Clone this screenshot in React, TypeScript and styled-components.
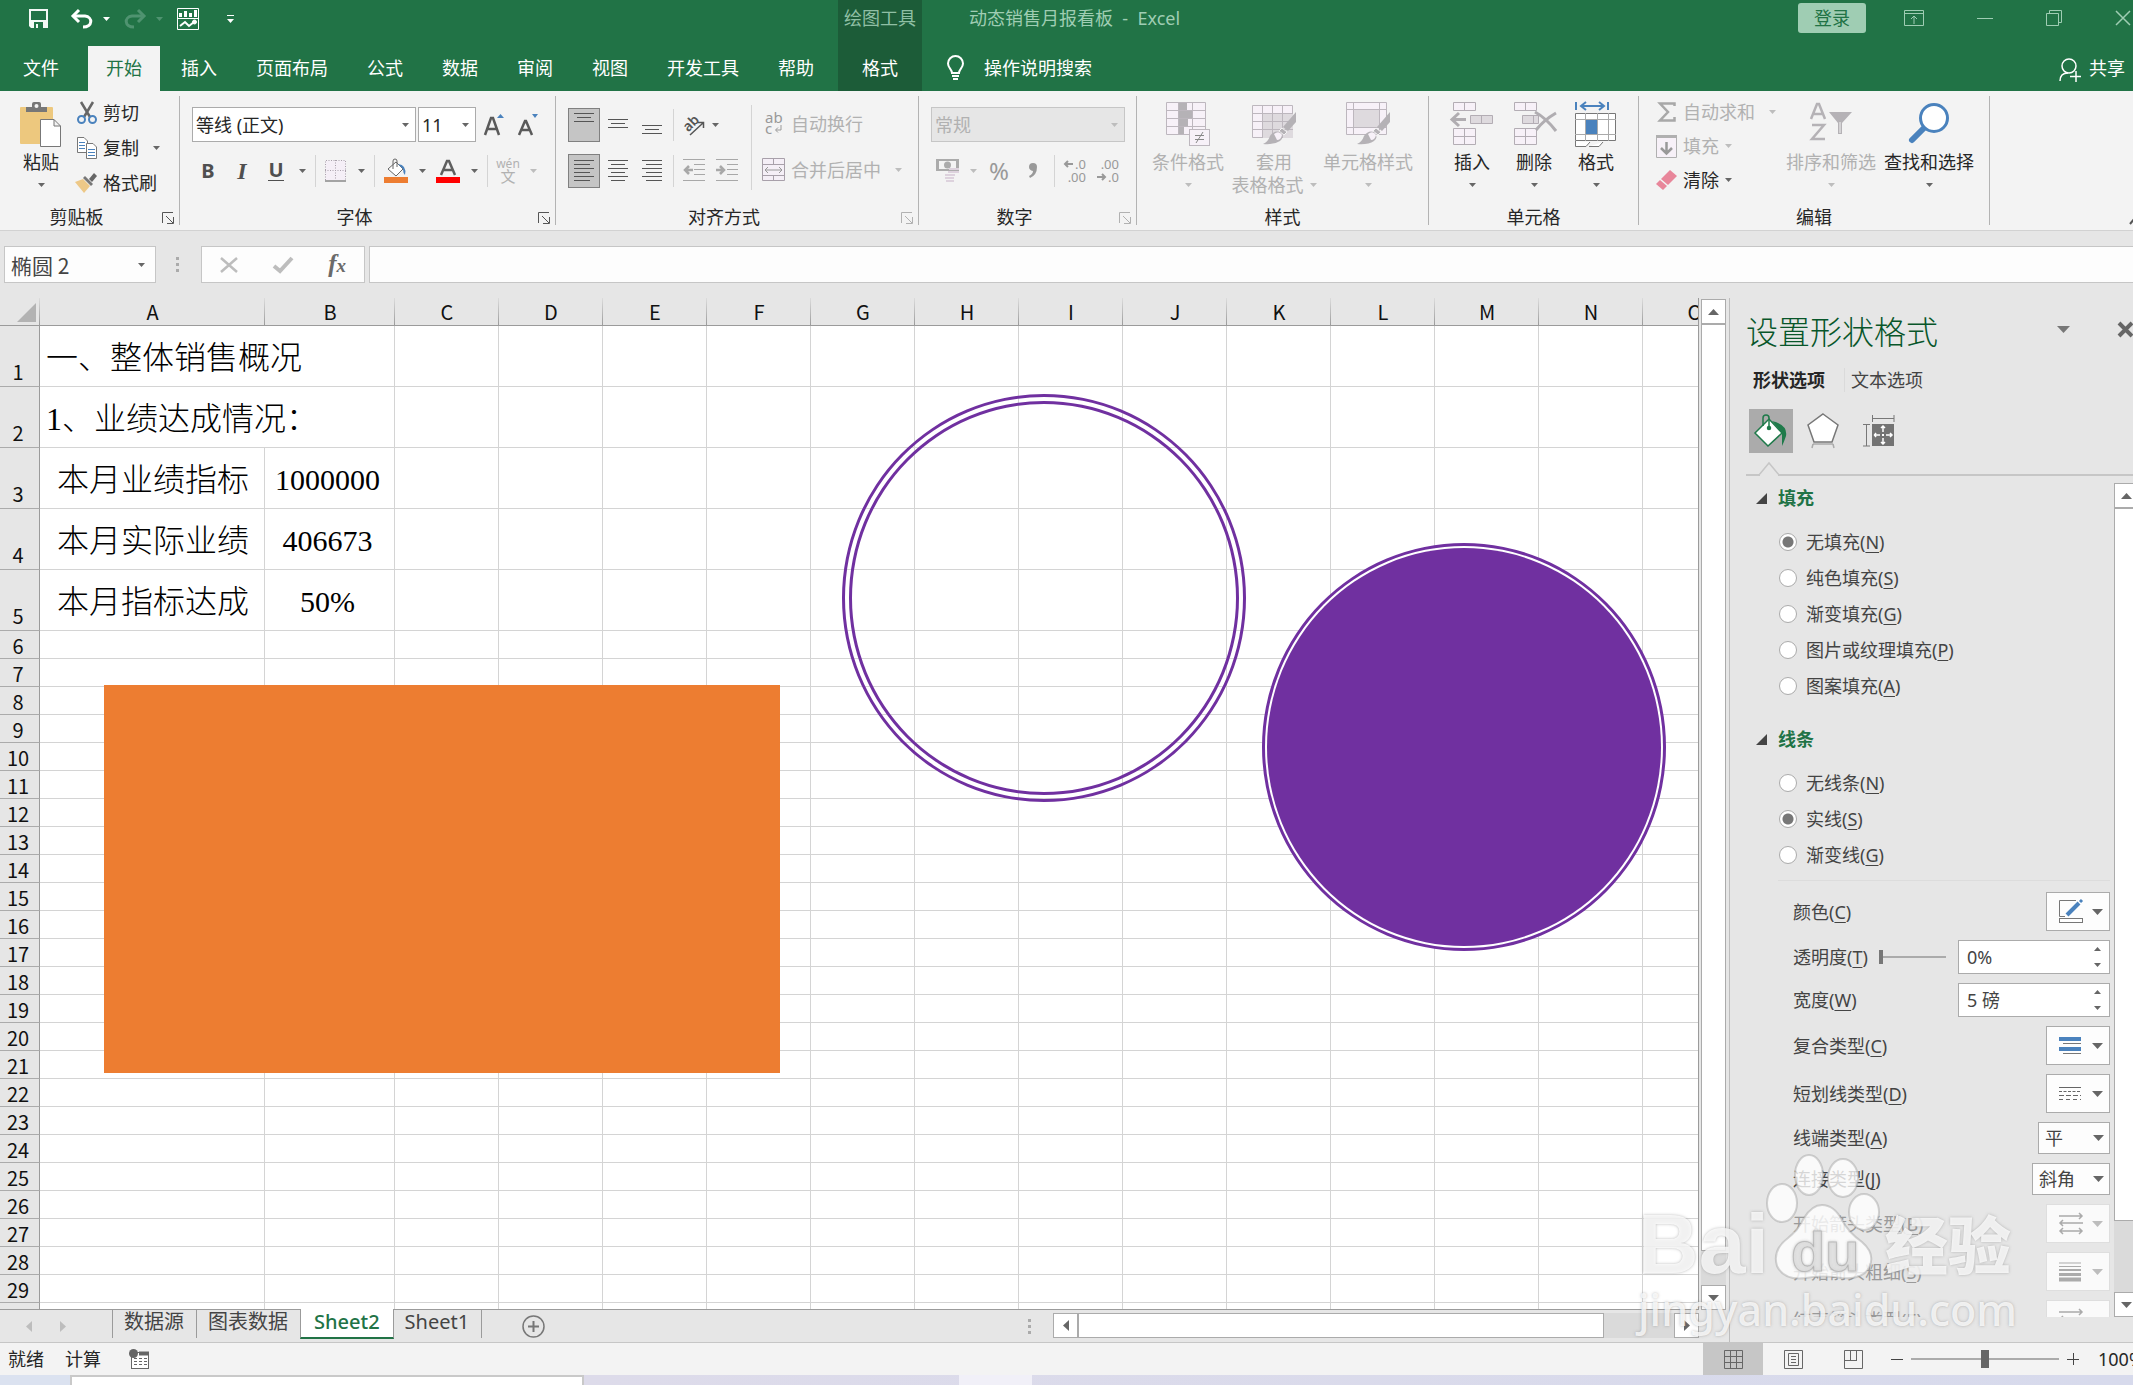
import React from 'react';
import styled, { createGlobalStyle, css } from 'styled-components';

const UI = '"Noto Sans", "Noto Sans CJK SC", sans-serif';
const GRID = '"Noto Sans CJK SC", sans-serif';

const c = {
  green: '#217346',
  darkGreen: '#1c5c38',
  mint: '#9fcdb3',
  ribbon: '#f3f3f3',
  chrome: '#e6e6e6',
  line: '#c6c6c6',
  text: '#262626',
  muted: '#b1b1b1',
  icon: '#666666',
  blue: '#4a82bd',
  purple: '#7030a0',
  orange: '#ed7d31',
};

const Global = createGlobalStyle`
  *, *::before, *::after { box-sizing: border-box; }
  body { margin: 0; overflow: hidden; background: ${c.chrome}; }
  button, input, select { font: inherit; color: inherit; margin: 0; }
  svg { display: block; flex: none; overflow: visible; }
`;

const Window = styled.div`
  display: flex;
  flex-direction: column;
  height: 100vh;
  overflow: hidden;
  position: relative;
  font-family: ${UI};
  font-size: 18px;
  line-height: 24px;
  color: ${c.text};
  white-space: nowrap;
`;

const plainButton = css`
  appearance: none;
  border: 0;
  background: none;
  padding: 0;
  color: inherit;
  cursor: pointer;
`;

/* ---------- title bar and tabs ---------- */

const Header = styled.header`
  display: grid;
  grid-template-columns: auto 84px minmax(0, 1fr);
  grid-template-rows: 46px 45px;
  background: ${c.green};
  color: #fff;
`;

const QuickAccess = styled.div`
  display: flex;
  align-items: center;
  gap: 14px;
  padding: 0 0 8px 29px;
`;

const QuickButton = styled.button<{ $before?: number; $after?: number }>`
  ${plainButton}
  display: flex;
  align-items: center;
  gap: 10px;
  margin-left: ${p => p.$before ?? 0}px;
  margin-right: ${p => p.$after ?? 0}px;
`;

const Tabs = styled.nav`
  grid-row: 2;
  display: flex;
  gap: 3px;
  padding: 0 6px 0 5px;
`;

const Tab = styled.button<{ $active?: boolean; $file?: boolean }>`
  ${plainButton}
  padding: 0 18px 2px;
  margin-right: ${p => (p.$file ? 8 : 0)}px;
  background: ${p => (p.$active ? c.ribbon : 'none')};
  color: ${p => (p.$active ? c.green : '#fff')};
`;

const ContextGroup = styled.div`
  grid-row: 1 / span 2;
  grid-column: 2;
  display: grid;
  grid-template-rows: 46px 45px;
  background: ${c.darkGreen};
  text-align: center;
`;

const ContextTitle = styled.span`
  color: #8fbfa4;
  line-height: 36px;
`;

const TitleArea = styled.div`
  grid-column: 3;
  display: flex;
  align-items: center;
  padding: 0 2px 10px 47px;
  color: ${c.mint};
`;

const DocTitle = styled.span`
  flex: 1;
  white-space: pre;
`;

const SignIn = styled.button`
  ${plainButton}
  width: 68px;
  height: 30px;
  margin-right: 38px;
  border-radius: 3px;
  background: ${c.mint};
  color: ${c.green};
`;

const WindowControls = styled.div`
  display: flex;
  align-items: center;
  gap: 53px;
`;

const ControlButton = styled.button`
  ${plainButton}
`;

const TellMeRow = styled.div`
  grid-column: 3;
  display: flex;
  align-items: center;
  justify-content: space-between;
  padding: 0 8px 2px 25px;
`;

const TellMe = styled.button`
  ${plainButton}
  display: flex;
  align-items: center;
  gap: 20px;
`;

const Share = styled(TellMe)`
  gap: 8px;
  & > svg { margin-top: 4px; }
`;

/* ---------- ribbon ---------- */

const RibbonBar = styled.div`
  display: flex;
  height: 140px;
  padding: 5px 0;
  background: ${c.ribbon};
  border-bottom: 1px solid #d2d2d2;
`;

const Group = styled.section<{ $w: number }>`
  flex: none;
  display: flex;
  flex-direction: column;
  width: ${p => p.$w}px;
  border-right: 1px solid #b3b3b3;
`;

const GroupBody = styled.div<{ $left: number }>`
  flex: 1;
  display: flex;
  padding-left: ${p => p.$left}px;
`;

const GroupFooter = styled.div`
  display: flex;
  align-items: center;
  height: 20px;
  padding-top: 3px;
`;

const GroupName = styled.span`
  flex: 1;
  text-align: center;
`;

const Launcher = styled.button<{ $dim?: boolean }>`
  ${plainButton}
  width: 26px;
  padding: 2px 0 0 9px;
  color: ${p => (p.$dim ? c.muted : '#555')};
`;

const Stack = styled.div`
  display: flex;
  flex-direction: column;
  gap: 11px;
  padding-top: 11px;
`;

const ToolRow = styled.div`
  display: flex;
  align-items: center;
  gap: 2px;
  height: 35px;
`;

const Tool = styled.button<{ $w?: number; $on?: boolean; $dim?: boolean }>`
  ${plainButton}
  display: flex;
  align-items: center;
  justify-content: center;
  gap: 7px;
  width: ${p => p.$w ?? 32}px;
  height: 34px;
  color: ${p => (p.$dim ? c.muted : '#4f4f4f')};
  ${p => p.$on && css`
    background: #c5c5c5;
    border: 1px solid #808080;
  `}
`;

const Letter = styled.span<{ $italic?: boolean; $line?: boolean }>`
  font-size: 20px;
  font-weight: 700;
  line-height: 20px;
  font-family: ${p => (p.$italic ? '"Liberation Serif", serif' : UI)};
  font-style: ${p => (p.$italic ? 'italic' : 'normal')};
  border-bottom: ${p => (p.$line ? '1px solid #4f4f4f' : '0')};
`;

const SerifLetter = styled(Letter)`
  font-size: 24px;
`;

const Split = styled.span`
  width: 1px;
  height: 32px;
  margin: 0 3px;
  background: #d4d4d4;
`;

const TallSplit = styled.span`
  width: 1px;
  height: 85px;
  margin: 9px 10px 0 8px;
  background: #d4d4d4;
`;

const SelectBox = styled.span<{ $w: number; $h?: number; $dim?: boolean }>`
  position: relative;
  display: flex;
  width: ${p => p.$w}px;
  height: ${p => p.$h ?? 35}px;
  color: ${p => (p.$dim ? c.muted : c.text)};
  & > select {
    appearance: none;
    width: 100%;
    padding: 0 20px 0 3px;
    border: 1px solid ${p => (p.$dim ? '#c6c6c6' : '#ababab')};
    border-radius: 0;
    background: ${p => (p.$dim ? c.chrome : '#fff')};
    opacity: 1;
  }
  & > svg {
    position: absolute;
    right: 7px;
    top: calc(50% - 2px);
    pointer-events: none;
  }
`;

const WideTool = styled.button<{ $dim?: boolean; $h: number; $far?: boolean }>`
  ${plainButton}
  display: flex;
  align-items: center;
  gap: 6px;
  height: ${p => p.$h}px;
  padding-bottom: 2px;
  color: ${p => (p.$dim ? c.muted : c.text)};
  & > svg:last-child { margin-left: ${p => (p.$far ? 8 : 0)}px; }
`;

const IconSlot = styled.span<{ $w: number; $end?: boolean }>`
  display: flex;
  justify-content: ${p => (p.$end ? 'flex-end' : 'center')};
  width: ${p => p.$w}px;
`;

const ToolColumn = styled.div<{ $w?: number }>`
  display: flex;
  flex-direction: column;
  width: ${p => (p.$w ? p.$w + 'px' : 'auto')};
`;

const BigTool = styled.button<{ $w: number; $dim?: boolean }>`
  ${plainButton}
  display: flex;
  flex-direction: column;
  align-items: center;
  align-self: flex-start;
  width: ${p => p.$w}px;
  padding-top: 6px;
  color: ${p => (p.$dim ? c.muted : c.text)};
`;

const BigIcon = styled.span`
  height: 48px;
`;

const BigSecond = styled.span`
  display: flex;
  align-items: center;
  gap: 6px;
  height: 22px;
`;

const Collapse = styled.button`
  ${plainButton}
  align-self: flex-end;
  margin-left: auto;
  width: 4px;
  overflow: hidden;
`;

/* ---------- formula bar ---------- */

const FormulaBar = styled.div`
  display: flex;
  align-items: center;
  padding: 15px 0 15px 4px;
  background: ${c.chrome};
`;

const NameBox = styled.label`
  display: flex;
  align-items: center;
  width: 152px;
  height: 37px;
  padding-right: 10px;
  border: 1px solid ${c.line};
  background: #fdfdfd;
  & > input {
    flex: 1;
    min-width: 0;
    border: 0;
    padding: 0 0 0 6px;
    background: none;
    font-family: ${GRID};
    font-size: 21px;
    color: #444;
  }
`;

const Grip = styled.span`
  display: flex;
  flex-direction: column;
  gap: 3px;
  margin: 0 22px 0 20px;
  &::before, &::after, & > i {
    content: '';
    width: 3px;
    height: 3px;
    background: #ababab;
  }
`;

const FormulaButtons = styled.div`
  display: flex;
  align-items: center;
  justify-content: space-between;
  width: 164px;
  height: 37px;
  padding: 0 18px;
  border: 1px solid ${c.line};
  background: #fdfdfd;
`;

const FxText = styled.span`
  font: italic 700 25px/30px "Liberation Serif", serif;
  color: #6a6a6a;
  & > small { font-size: 19px; }
`;

const FormulaInput = styled.input`
  flex: 1;
  height: 37px;
  margin-left: 4px;
  border: 1px solid ${c.line};
  border-right: 0;
  border-radius: 0;
  background: #fdfdfd;
  padding: 0 8px;
`;

/* ---------- workspace ---------- */

const Workspace = styled.main`
  flex: 1;
  min-height: 0;
  display: grid;
  grid-template-columns: minmax(0, 1fr) 404px;
`;

const Book = styled.div`
  display: grid;
  grid-template-rows: minmax(0, 1fr) 32px;
  grid-template-columns: minmax(0, 1fr) 30px;
  min-height: 0;
`;

const Sheet = styled.div`
  position: relative;
  overflow: hidden;
  border-bottom: 1px solid #9b9b9b;
  border-right: 1px solid #9b9b9b;
`;

const Cells = styled.table`
  border-collapse: separate;
  border-spacing: 0;
  table-layout: fixed;
  width: 1747px;
  background: #fff;
  font-family: ${GRID};
  font-size: 20px;
  color: #111;
`;

const HeadCell = styled.th`
  height: 28px;
  padding: 2px 0;
  font-weight: 400;
  line-height: 22px;
  background: linear-gradient(#dcdcdc, #9b9b9b) right / 1px 100% no-repeat ${c.chrome};
  border-bottom: 1px solid #9b9b9b;
  &:first-child { padding: 5px 4px 3px 17px; }
`;

const RowHead = styled.th<{ $tall: boolean }>`
  height: ${p => (p.$tall ? 61 : 28)}px;
  padding: 0 3px ${p => (p.$tall ? 2 : 0)}px 0;
  font-weight: 400;
  line-height: 25px;
  vertical-align: bottom;
  background: ${c.chrome};
  border-right: 1px solid #9b9b9b;
  border-bottom: 1px solid #ababab;
`;

const Cell = styled.td<{ $kind?: 'title' | 'label' | 'number' }>`
  padding: 4px 0 0;
  border-right: 1px solid #d4d4d4;
  border-bottom: 1px solid #d4d4d4;
  text-align: ${p => (p.$kind === 'title' ? 'left' : 'center')};
  padding-left: ${p => (p.$kind === 'title' ? 6 : p.$kind === 'label' ? 2 : 0)}px;
  padding-right: ${p => (p.$kind === 'number' ? 4 : 0)}px;
  font-family: "Liberation Serif", "Noto Sans CJK SC", serif;
  font-size: ${p => (p.$kind === 'number' ? 30 : 32)}px;
  font-weight: 300;
  line-height: 36px;
  color: #000;
`;

const Shape = styled.div<{ $x: number; $y: number; $w: number; $h: number }>`
  position: absolute;
  left: ${p => p.$x}px;
  top: ${p => p.$y}px;
  width: ${p => p.$w}px;
  height: ${p => p.$h}px;
`;

const Rectangle = styled(Shape)`
  background: ${c.orange};
`;

const Ring = styled(Shape)`
  border: 10px double ${c.purple};
  border-radius: 50%;
`;

const Disc = styled(Shape)`
  padding: 2px;
  border: 3px solid ${c.purple};
  border-radius: 50%;
  background:
    linear-gradient(${c.purple}, ${c.purple}) content-box,
    linear-gradient(#fff, #fff) padding-box;
`;

const VScroll = styled.div`
  display: flex;
  flex-direction: column;
  width: 25px;
  margin: 1px 0 0 2px;
`;

const ScrollButton = styled.button`
  ${plainButton}
  flex: none;
  display: flex;
  align-items: center;
  justify-content: center;
  width: 25px;
  height: 25px;
  border: 1px solid #ababab;
  background: #fff;
  color: ${c.icon};
`;

const Thumb = styled.span<{ $grow: number }>`
  flex: ${p => p.$grow} 1 0;
  border: 1px solid #ababab;
  background: #fff;
`;

const Track = styled.span<{ $grow: number }>`
  flex: ${p => p.$grow} 1 0;
  background: #dadada;
`;

const SheetBar = styled.div`
  grid-column: 1 / span 2;
  display: flex;
  padding-right: 30px;
`;

const SheetNav = styled.div`
  display: flex;
  align-items: center;
  gap: 28px;
  width: 112px;
  padding-left: 26px;
  color: #bdbdbd;
`;

const SheetTab = styled.button<{ $active?: boolean; $edge?: 'both' | 'left' | 'right' }>`
  ${plainButton}
  position: relative;
  height: 28px;
  padding: 0 12px 4px 11px;
  font-size: 20px;
  line-height: 24px;
  color: #444;
  border-left: ${p => (p.$edge === 'left' || p.$edge === 'both' ? '1px solid #9b9b9b' : '0')};
  border-right: ${p => (p.$edge === 'right' || p.$edge === 'both' ? '1px solid #9b9b9b' : '0')};
  ${p => p.$active && css`
    background: #fff;
    color: ${c.green};
    font-weight: 500;
    margin-top: -1px;
    height: 30px;
    padding: 0 13px 3px;
    border-bottom: 2px solid ${c.green};
  `}
`;

const AddSheet = styled.button`
  ${plainButton}
  margin-left: 40px;
  color: #777;
`;

const HScroll = styled.div`
  display: flex;
  flex: none;
  width: 38%;
  height: 25px;
  margin-top: 3px;
`;

const GripHolder = styled.div`
  display: flex;
  align-items: center;
  margin-left: auto;
`;

/* ---------- format pane ---------- */

const Pane = styled.aside`
  display: flex;
  flex-direction: column;
  min-width: 0;
  min-height: 0;
  border-left: 1px solid #bdbdbd;
  padding-bottom: 25px;
`;

const PaneTitle = styled.div`
  display: flex;
  align-items: center;
  height: 68px;
  padding-left: 16px;
  color: #666;
`;

const PaneName = styled.h2`
  flex: 1;
  margin: 0;
  font-size: 32px;
  font-weight: 300;
  line-height: 40px;
  color: #08562a;
`;

const PaneIconButton = styled.button<{ $after?: number }>`
  ${plainButton}
  padding-bottom: 5px;
  margin-right: ${p => p.$after ?? 0}px;
`;

const PaneTabs = styled.div`
  display: flex;
  align-items: center;
  height: 28px;
  padding-left: 23px;
`;

const PaneTab = styled.button<{ $active?: boolean }>`
  ${plainButton}
  font-weight: ${p => (p.$active ? 700 : 400)};
  color: ${p => (p.$active ? c.text : '#444')};
  & + & {
    margin-left: 19px;
    padding-left: 6px;
    border-left: 1px solid #dadada;
  }
`;

const PaneIcons = styled.div`
  position: relative;
  display: flex;
  gap: 4px;
  height: 82px;
  margin-left: 16px;
  padding: 15px 0 0 3px;
  border-bottom: 2px solid ${c.line};
  & > svg {
    position: absolute;
    left: 12px;
    bottom: -2px;
  }
`;

const Category = styled.button<{ $on?: boolean }>`
  ${plainButton}
  display: flex;
  align-items: center;
  justify-content: center;
  width: ${p => (p.$on ? 44 : 52)}px;
  height: 44px;
  background: ${p => (p.$on ? '#ababab' : 'none')};
`;

const PaneBody = styled.div`
  flex: 1;
  min-height: 0;
  display: flex;
`;

const Options = styled.div`
  flex: 1;
  overflow: hidden;
  padding: 10px 4px 0 26px;
  color: #444;
`;

const SectionHead = styled.button`
  ${plainButton}
  display: flex;
  align-items: center;
  gap: 11px;
  height: 24px;
  margin-bottom: 14px;
  font-weight: 700;
  color: ${c.green};
`;

const RadioList = styled.div<{ $after: number }>`
  margin-bottom: ${p => p.$after}px;
`;

const RadioRow = styled.label`
  display: flex;
  align-items: center;
  gap: 9px;
  height: 36px;
  padding-left: 23px;
  & > input {
    appearance: none;
    width: 18px;
    height: 18px;
    border: 1px solid #ababab;
    border-radius: 50%;
    background: #fff;
  }
  & > input:checked {
    background: radial-gradient(circle, #777 5px, #fff 6px);
  }
`;

const Key = styled.u`
  text-underline-offset: 3px;
  text-decoration-thickness: 1px;
`;

const Fields = styled.div`
  display: flex;
  flex-direction: column;
  gap: 9px;
  margin-left: 22px;
  padding: 11px 0 0 15px;
  border-top: 1px solid #dcdcdc;
`;

const Field = styled.div<{ $h: number; $dim?: boolean }>`
  display: flex;
  align-items: center;
  justify-content: space-between;
  flex: none;
  height: ${p => p.$h}px;
  color: ${p => (p.$dim ? '#9a9a9a' : '#444')};
`;

const DropButton = styled.button<{ $dim?: boolean }>`
  ${plainButton}
  display: flex;
  align-items: center;
  justify-content: space-between;
  width: 64px;
  height: 100%;
  padding: 0 6px 0 12px;
  border: 1px solid ${p => (p.$dim ? '#dedede' : '#ababab')};
  background: ${p => (p.$dim ? '#fafafa' : '#fdfdfd')};
`;

const PaneSelect = styled(SelectBox)`
  color: #444;
  & > select { padding-left: 6px; background: #fdfdfd; }
  & > svg { right: 6px; top: calc(50% - 3px); }
`;

const Spinner = styled.span`
  display: flex;
  width: 152px;
  height: 34px;
  border: 1px solid #ababab;
  background: #fff;
  & > input {
    flex: 1;
    min-width: 0;
    border: 0;
    padding: 0 0 0 8px;
    background: none;
  }
`;

const SpinArrows = styled.span`
  display: flex;
  flex-direction: column;
  justify-content: space-between;
  padding: 6px 8px;
`;

const rangeTrack = css<{ $thumbW: number; $thumbH: number; $thumb: string }>`
  appearance: none;
  height: 24px;
  background: none;
  &::-webkit-slider-runnable-track {
    height: 2px;
    background: #ababab;
  }
  &::-webkit-slider-thumb {
    appearance: none;
    width: ${p => p.$thumbW}px;
    height: ${p => p.$thumbH}px;
    margin-top: ${p => 1 - p.$thumbH / 2}px;
    background: ${p => p.$thumb};
  }
`;

const Range = styled.input<{ $w: number; $thumbW: number; $thumbH: number; $thumb: string }>`
  ${rangeTrack}
  width: ${p => p.$w}px;
  padding: 0;
`;

const PaneScroll = styled.div`
  flex: none;
  display: flex;
  flex-direction: column;
  width: 19px;
  margin-top: 7px;
  overflow: hidden;
  & > span { width: 25px; }
`;

/* ---------- status bar and desktop strip ---------- */

const StatusBar = styled.footer`
  flex: none;
  display: flex;
  align-items: center;
  height: 33px;
  border-top: 1px solid ${c.line};
  background: ${c.ribbon};
  overflow: hidden;
`;

const StatusText = styled.div`
  flex: 1;
  display: flex;
  align-items: center;
  gap: 21px;
  padding-left: 8px;
  & > svg { margin-left: 7px; }
`;

const ViewButton = styled.button<{ $on?: boolean }>`
  ${plainButton}
  display: flex;
  align-items: center;
  justify-content: center;
  width: 60px;
  height: 32px;
  background: ${p => (p.$on ? '#c6c6c6' : 'none')};
`;

const Zoom = styled.div`
  display: flex;
  align-items: center;
  gap: 8px;
  margin-left: 8px;
`;

const ZoomValue = styled.span`
  width: 35px;
  margin-left: 11px;
  overflow: hidden;
`;

const Desktop = styled.div`
  flex: none;
  display: grid;
  grid-template-columns: 70px 514px 375px 73px 1fr;
  height: 10px;
  background: linear-gradient(90deg, #dbe2f0 0 70px, #dddbea 584px, #d7daec);
`;

const DesktopWindow = styled.span`
  grid-column: 2;
  border: 2px solid #c9c9c9;
  border-bottom: 0;
  background: #fff;
`;

const DesktopTile = styled.span`
  grid-column: 4;
  background: #f1f0f8;
`;

/* ---------- watermark ---------- */

const Watermark = styled.div`
  position: absolute;
  right: 111px;
  bottom: 47px;
  width: 384px;
  color: rgba(255, 255, 255, 0.8);
  text-shadow: 0 0 3px rgba(120, 120, 120, 0.5);
  pointer-events: none;
`;

const MarkRow = styled.div`
  display: flex;
  align-items: flex-end;
  height: 130px;
`;

const MarkLatin = styled.span`
  width: 126px;
  font: 700 84px/84px "Liberation Sans", sans-serif;
  margin-bottom: -4px;
`;

const MarkHan = styled.span`
  margin-left: 1px;
  font: 900 63px/76px "Noto Sans CJK SC", sans-serif;
  margin-bottom: 2px;
`;

const MarkUrl = styled.div`
  font: 500 43px/56px "Noto Sans", sans-serif;
`;

/* ---------- drawings ---------- */

type Dir = 'up' | 'down' | 'left' | 'right';

function Caret({ w = 7, h = 4, color = c.icon, dir = 'down' }: { w?: number; h?: number; color?: string; dir?: Dir }) {
  const pts = {
    down: `0,0 ${w},0 ${w / 2},${h}`,
    up: `0,${h} ${w},${h} ${w / 2},0`,
    left: `${w},0 ${w},${h} 0,${h / 2}`,
    right: `0,0 0,${h} ${w},${h / 2}`,
  }[dir];
  return <svg width={w} height={h}><polygon points={pts} fill={color} /></svg>;
}

const Lines = ({ rows, color = '#555', w = 20, h = 24 }: { rows: [number, number, number][]; color?: string; w?: number; h?: number }) => (
  <svg width={w} height={h} stroke={color} strokeWidth="1">
    {rows.map(([x1, x2, y]) => <path key={y} d={`M${x1} ${y + 0.5}H${x2}`} />)}
  </svg>
);

const SaveIcon = () => (
  <svg width="20" height="20" fill="#fff">
    <path fillRule="evenodd" d="M0 0H19V19H2L0 17ZM2 2V11H17V2ZM5 13V19H7V15H9V19H14V13Z" fillOpacity=".95" />
  </svg>
);

const UndoIcon = () => (
  <svg width="22" height="20" fill="none" stroke="#fff" strokeWidth="3">
    <path d="M3 7H14C22 8 22 18 12 18" />
    <path d="M8 1L2 7L8 13" />
  </svg>
);

const RedoIcon = () => (
  <svg width="22" height="20" fill="none" stroke="#4f9370" strokeWidth="3">
    <path d="M19 7H8C0 8 0 18 10 18" />
    <path d="M14 1L20 7L14 13" />
  </svg>
);

const ChartIcon = () => (
  <svg width="22" height="22" fill="none" stroke="#fff">
    <path d="M.5 .5H21.5V21.5H.5ZM0 10.5H22" />
    <path d="M3.500 9V5M8.500 9V3M13.500 9V5M18.500 9V2" strokeWidth="3" />
    <path d="M3 18L8 14L12 18L17 14" strokeWidth="2" />
    <circle cx="17.500" cy="14" r="2" fill="#fff" />
  </svg>
);

const BulbIcon = () => (
  <svg width="17" height="25" fill="none" stroke="#fff" strokeWidth="2">
    <path d="M5 18C5 14 1 13 1 8.500A7.500 7.500 0 0 1 16 8.500C16 13 12 14 12 18ZM5 21H12M6 24H11" />
  </svg>
);

const PersonIcon = () => (
  <svg width="22" height="24" fill="none" stroke="#fff" strokeWidth="1.500">
    <circle cx="10" cy="8" r="7" />
    <path d="M1 23C1 17 5 15 9 15M17 13V24M11 18.500H22" />
  </svg>
);

const PasteIcon = () => (
  <svg width="42" height="46">
    <rect y="5" width="33" height="37" rx="1" fill="#edc87e" />
    <path d="M6 10V5H12V2Q12 0 14 0H19Q21 0 21 2V5H27V10Z" fill="#777" />
    <circle cx="16.500" cy="4" r="2" fill="#f3f3f3" />
    <path d="M20.500 17.500H34L40.500 24V44.500H20.500ZM34 17.500V24H40.500" fill="#fff" stroke="#777" />
  </svg>
);

const CutIcon = () => (
  <svg width="20" height="22" fill="none">
    <path d="M4 0L13 15M16 0L7 15" stroke="#666" strokeWidth="2.500" />
    <circle cx="4.500" cy="17.500" r="3.500" stroke={c.blue} strokeWidth="2" />
    <circle cx="15.500" cy="17.500" r="3.500" stroke={c.blue} strokeWidth="2" />
  </svg>
);

const CopyIcon = () => (
  <svg width="20" height="22" fill="#fff" stroke="#777">
    <path d="M.5 .5H7L10.500 4V15.500H.5Z" />
    <path d="M2 5.500H8M2 8.500H8M2 11.500H8" stroke={c.blue} />
    <path d="M9.500 6.500H16L19.500 10V21.500H9.500Z" />
    <path d="M11 12.500H18M11 15.500H18M11 18.500H18" stroke={c.blue} />
  </svg>
);

const BrushIcon = () => (
  <svg width="22" height="20">
    <path d="M0 9L8 6L15 13L9 20Z" fill="#edc887" />
    <path d="M8 5L10 3L18 11L16 13Z" fill="#777" />
    <path d="M14 6L19 0L22 3L17 9Z" fill="#666" />
  </svg>
);

const GrowFont = ({ small }: { small?: boolean }) => (
  <svg width="20" height="22">
    <path d={small ? 'M1 21L7 7H8L14 21M3.500 16H11.500' : 'M1 21L7 4H9L15 21M4 15H12'} fill="none" stroke="#5a5a5a" strokeWidth="2.500" />
    <polygon points={small ? '14,0 20,0 17,4' : '13,4 20,4 16.500,0'} fill={c.blue} />
  </svg>
);

const BorderIcon = () => (
  <svg width="22" height="22" fill="#f5eff7" stroke="#a9a0ab">
    <path d="M.5 20V.5H20.500V20M10.500 0V20M0 10.500H21" strokeDasharray="1 1.500" />
    <path d="M0 21H21" stroke="#888" strokeWidth="1.500" />
  </svg>
);

const FillIcon = () => (
  <svg width="24" height="24">
    <path d="M4 10L12 3L19 10L12 17Z" fill="#fff" stroke="#666" />
    <path d="M9 10V2Q9 0 11 0T13 2V8" fill="none" stroke="#666" />
    <path d="M14 5Q23 6 21 16Q19 14 19 10Z" fill={c.blue} />
    <rect y="18" width="24" height="6" fill={c.orange} />
  </svg>
);

const FontColorIcon = () => (
  <svg width="24" height="24">
    <path d="M5 16L11 2H13L19 16M7.500 11H16.500" fill="none" stroke="#5f5f5f" strokeWidth="2.500" />
    <rect y="18" width="24" height="6" fill="#f00" />
  </svg>
);

const Phonetic = styled.span`
  display: flex;
  flex-direction: column;
  align-items: center;
  font-size: 12px;
  line-height: 11px;
  & > b { font-weight: 400; font-size: 15px; line-height: 14px; }
`;

const OrientIcon = () => (
  <svg width="22" height="22">
    <text x="0" y="14" transform="rotate(-45 8 10)" fontSize="14" fontWeight="600" fontFamily="Noto Sans, sans-serif" fill="#555">ab</text>
    <path d="M7 21L20 9M15 8.500H20.500V14" fill="none" stroke="#555" strokeWidth="1.500" />
  </svg>
);

const IndentIcon = ({ out }: { out?: boolean }) => (
  <svg width="22" height="23" stroke="#a8a8a8" fill="none">
    <path d="M0 .5H22M11 5.500H22M11 10.500H22M11 15.500H22M0 21.500H22" />
    <path d={out ? 'M10 11H2M6 7L2 11L6 15' : 'M0 11H8M4 7L8 11L4 15'} strokeWidth="2.500" />
  </svg>
);

const WrapIcon = () => (
  <svg width="18" height="22" fontFamily="Noto Sans, sans-serif" fontSize="15" fill="#999">
    <text x="0" y="10">ab</text>
    <text x="0" y="21">c</text>
    <path d="M16 12V17H11M13 14.500L10.500 17L13 19.500" fill="none" stroke="#999" />
  </svg>
);

const MergeIcon = () => (
  <svg width="23" height="23" fill="#f5eff7" stroke="#a8a0aa">
    <path d="M.5 .5H22.500V22.500H.5ZM0 6.500H23M0 17.500H23M11.500 0V6M11.500 18V23" />
    <path d="M3 12H20M6 9L3 12L6 15M17 9L20 12L17 15" fill="none" stroke="#999" />
  </svg>
);

const MoneyIcon = () => (
  <svg width="23" height="23">
    <path fillRule="evenodd" d="M0 0H23V12H0ZM3 2V10H20V2Z" fill="#ababab" />
    <circle cx="11.500" cy="6" r="3.500" fill="#ababab" />
    <path d="M13 10H23M12 13H23M9 16H19M9 19H18M10 22H18" stroke="#ddd2dd" strokeWidth="2" />
  </svg>
);

const DecimalIcon = ({ more }: { more?: boolean }) => (
  <svg width="23" height="24" fontFamily="Noto Sans, sans-serif" fontSize="13" fill="#999">
    <text x="22" y="10" textAnchor="end">{more ? '.0' : '.00'}</text>
    <text x="22" y="23" textAnchor="end">{more ? '.00' : '.0'}</text>
    <path d={more ? 'M9 5H1M4 2L1 5L4 8' : 'M0 18H8M5 15L8 18L5 21'} fill="none" stroke="#999" strokeWidth="2" />
  </svg>
);

const CondIcon = () => (
  <svg width="44" height="45" fill="#f7f1f8" stroke="#bdb7be">
    <path d="M.5 .5H39.500V32.500H.5ZM0 8.500H40M0 16.500H40M0 24.500H40M12.500 0V33M26.500 0V33" />
    <path d="M13 1H21V8H13ZM13 9H26V16H13ZM13 17H22V24H13ZM13 25H18V32H13Z" fill="#b5b2b6" stroke="none" />
    <rect x="23.500" y="27.500" width="20" height="16" />
    <path d="M29 33.500H38M29 37.500H38M37 30L30 41" stroke="#888" />
  </svg>
);

const brush = (
  <>
    <path d="M44 10V20L36 29L31 25Z" fill="#b5b2b6" stroke="none" />
    <path d="M30 26L35 30L32 33L27 29Z" fill="#b5b2b6" stroke="#f3f3f3" />
    <path d="M11 42Q16 40 18 34Q22 28 28 30Q33 35 28 39Q22 43 11 42Z" fill="#b5b2b6" stroke="none" />
    <path d="M22 32Q27 28 30 33Q29 38 25 38Z" fill="#f7f1f8" stroke="none" />
  </>
);

const TableStyleIcon = () => (
  <svg width="44" height="45" fill="#f7f1f8" stroke="#bdb7be">
    <path d="M.5 3.500H40.500V35.500H.5Z" />
    <rect x="11" y="11" width="30" height="25" fill="#dedade" stroke="none" />
    <path d="M0 11.500H41M0 19.500H41M0 27.500H41M10.500 3V36M20.500 3V36M30.500 3V36" />
    {brush}
  </svg>
);

const CellStyleIcon = () => (
  <svg width="44" height="45" fill="#f7f1f8" stroke="#bdb7be">
    <path d="M.5 .5H40.500V32.500H.5ZM0 7.500H41M0 25.500H41M7.500 0V33M33.500 0V33" />
    <rect x="8" y="8" width="25" height="17" fill="#dedade" stroke="none" />
    {brush}
  </svg>
);

const gridBits = (
  <path d="M.5 .5H22.500V8.500H.5ZM11.500 0V9M.5 26.500H22.500V42.500H.5ZM0 34.500H23M11.500 26V43" />
);

const InsertIcon = () => (
  <svg width="44" height="44" fill="#f7f1f8" stroke="#b3adb4">
    <g transform="translate(3 0)">{gridBits}</g>
    <path d="M20.500 13.500H42.500V21.500H20.500ZM31.500 13V22" fill="#dedade" />
    <path d="M16 17.500H2M9 11L2 17.500L9 24" fill="none" stroke="#b0adb1" strokeWidth="3" />
  </svg>
);

const DeleteIcon = () => (
  <svg width="40" height="44" fill="#f7f1f8" stroke="#b3adb4">
    {gridBits}
    <path d="M8.500 13.500H24.500V21.500H8.500ZM19.500 13V22" fill="#dedade" />
    <path d="M21 10Q32 16 42 29M42 11Q30 18 22 28" fill="none" stroke="#b0adb1" strokeWidth="3" />
  </svg>
);

const FormatIcon = () => (
  <svg width="42" height="46" fill="#fff" stroke="#777">
    <path d="M.5 11.500H40.500V38.500H.5Z" />
    <path d="M0 17.500H41M0 32.500H41M10.500 11V39M22.500 11V39M33.500 11V39" stroke="#aaa" />
    <rect x="11" y="18" width="11" height="14" fill={c.blue} stroke="none" />
    <path d="M.5 39V44.500H11L15 40M14 44.500H24L28 40" />
    <path d="M1 0V8M33 0V8M6 4H29M11 0L6 4L11 8M24 0L29 4L24 8" fill="none" stroke={c.blue} strokeWidth="2" />
  </svg>
);

const SigmaIcon = () => (
  <svg width="18" height="20" fill="none" stroke="#a8a8a8" strokeWidth="2.500">
    <path d="M16.500 4V1.500H2L10 10L2 18.500H16.500V15" />
  </svg>
);

const FillDownIcon = () => (
  <svg width="21" height="23" fill="#f7f1f8" stroke="#b0b0b0">
    <path d="M.5 .5H20.500V22.500H.5Z" />
    <path d="M0 1.500H21" strokeWidth="3" />
    <path d="M10.500 7V18M5 13L10.500 18.500L16 13" fill="none" stroke="#999" strokeWidth="2.500" />
  </svg>
);

const EraserIcon = () => (
  <svg width="21" height="20" fill="#e8869a">
    <path d="M5 9L14 0L21 6L12 15Z" />
    <path d="M4 10L11 16L7 20L0 14Z" />
  </svg>
);

const SortIcon = () => (
  <svg width="42" height="40" fill="none" stroke="#b5b2b6" strokeWidth="2.500">
    <path d="M1 17L7 2H9L15 17M3 12H13M2 23H14L2 37H15" />
    <path d="M19 10H42L32 21V32H28V21Z" fill="#b5b2b6" stroke="none" />
    <path d="M30 20V31" stroke="#f3f3f3" strokeWidth="1" />
  </svg>
);

const FindIcon = () => (
  <svg width="40" height="42">
    <path d="M3 38L15 26" stroke={c.blue} strokeWidth="6" strokeLinecap="round" />
    <circle cx="25" cy="16" r="13.500" fill="#fff" stroke={c.blue} strokeWidth="3" />
  </svg>
);

const LauncherIcon = () => (
  <svg width="12" height="12" fill="none" stroke="currentColor">
    <path d="M.5 11V.5H11M4 4L11 11M11.500 5V11.500H5" />
  </svg>
);

const BucketIcon = () => (
  <svg width="34" height="34" fill="none" stroke="#1f7a4a" strokeWidth="1.500">
    <path d="M1 19L15 5L28 19L14 32Z" fill="#fff" />
    <path d="M9 12V4Q9 1 12 1T15 4V13" />
    <circle cx="15" cy="14" r="1.500" fill="#1f7a4a" />
    <path d="M18 7Q34 11 32 22Q30 28 28 32V19Z" fill="#1f7a4a" stroke="none" />
  </svg>
);

const PentagonIcon = () => (
  <svg width="32" height="36" fill="#fff" stroke="#777" strokeWidth="1.500">
    <path d="M16 1L31 12L25 29H7L1 12Z" />
    <path d="M6 31H26M6 31L5 35M26 31L27 35" stroke="#aaa" />
  </svg>
);

const SizeIcon = () => (
  <svg width="32" height="32" fill="none" stroke="#777">
    <path d="M9.500 0V7M31 0V7M9 3.500H31M0 9.500H7M0 31H7M3.500 9V31" />
    <rect x="9" y="9" width="22" height="22" fill="#737373" stroke="none" />
    <path d="M20 11V17M20 29V23M12 20H17M29 20H23M18 13L20 11L22 13M18 27L20 29L22 27M13 18L11.500 20L13 22M27 18L29 20L27 22" stroke="#fff" strokeWidth="1.500" />
    <rect x="19" y="19" width="2" height="2" fill="#fff" stroke="none" />
  </svg>
);

const PenIcon = () => (
  <svg width="25" height="24" fill="none" stroke="#777">
    <path d="M17 .5H.5V16.500H6" />
    <path d="M8 15L20 3" stroke={c.blue} strokeWidth="4" />
    <path d="M21 2L23 0" stroke={c.blue} strokeWidth="3" />
    <rect x=".5" y="18.500" width="23" height="4" fill="#fff" />
  </svg>
);

const CompoundIcon = () => (
  <svg width="23" height="18">
    <path d="M0 2H22M0 12H22" stroke={c.blue} strokeWidth="4" />
    <path d="M4 6.500H22M4 16.500H22" stroke="#777" />
  </svg>
);

const DashIcon = () => (
  <svg width="23" height="14" stroke="#666">
    <path d="M0 .5H22" />
    <path d="M0 4.500H22" strokeDasharray="3 1.500" />
    <path d="M0 8.500H22" strokeDasharray="5 2" />
    <path d="M0 12.500H22" strokeDasharray="4 3" />
  </svg>
);

const ArrowsIcon = () => (
  <svg width="25" height="24" fill="none" stroke="#ababab" strokeWidth="1.500">
    <path d="M0 4H23M20 1L23 4L20 7M24 11H1M4 8L1 11L4 14M1 19H23M4 16L1 19L4 22M20 16L23 19L20 22" />
  </svg>
);

const WeightsIcon = () => (
  <svg width="23" height="20" stroke="#ababab">
    <path d="M0 1H22M0 4.500H22" />
    <path d="M0 8H22" strokeWidth="2" />
    <path d="M0 12.500H22" strokeWidth="3" />
    <path d="M0 17.500H22" strokeWidth="4" />
  </svg>
);

const MacroIcon = () => (
  <svg width="21" height="20">
    <rect x="2.500" y="3.500" width="17" height="16" fill="#fff" stroke="#666" />
    <path d="M10 4.500H20" stroke="#666" strokeWidth="4" />
    <path d="M5 9.500H18M5 12.500H18M5 15.500H18" stroke="#666" strokeDasharray="3 2" />
    <circle cx="4.500" cy="4.500" r="4.500" fill="#666" />
  </svg>
);

const Paw = () => (
  <svg width="120" height="128" viewBox="0 0 120 128">
    <g fill="rgba(255,255,255,.78)" stroke="rgba(150,150,150,.4)" strokeWidth="2">
      <ellipse cx="45" cy="21" rx="14" ry="20" />
      <ellipse cx="79" cy="24" rx="15" ry="19" />
      <ellipse cx="18" cy="49" rx="15" ry="19" />
      <ellipse cx="100" cy="58" rx="15" ry="18" />
      <path d="M58 51Q70 51 78 66Q84 78 98 88Q112 100 105 114Q98 126 78 124Q58 121 42 124Q20 127 13 112Q8 96 24 84Q34 76 40 64Q48 51 58 51Z" />
    </g>
    <text x="27" y="117" fontFamily="Liberation Sans, sans-serif" fontWeight="700" fontSize="56" fill="rgba(228,228,228,.9)" stroke="rgba(150,150,150,.45)">du</text>
  </svg>
);

/* ---------- parts ---------- */

const DIM = '#bdbdbd';

function RibbonGroup({ name, width, left, launcher, children }: {
  name: string; width: number; left: number; launcher?: 'on' | 'dim'; children: React.ReactNode;
}) {
  return (
    <Group $w={width} aria-label={name}>
      <GroupBody $left={left}>{children}</GroupBody>
      <GroupFooter>
        <GroupName>{name}</GroupName>
        {launcher && <Launcher $dim={launcher === 'dim'} aria-label={name + '设置'}><LauncherIcon /></Launcher>}
      </GroupFooter>
    </Group>
  );
}

function Big({ icon, label, second, width, dim }: { icon: React.ReactNode; label: string; second?: string; width: number; dim?: boolean }) {
  return (
    <BigTool $w={width} $dim={dim}>
      <BigIcon>{icon}</BigIcon>
      <span>{label}</span>
      <BigSecond>{second}<Caret color={dim ? DIM : c.icon} /></BigSecond>
    </BigTool>
  );
}

const DropCaret = ({ label, dim }: { label: string; dim?: boolean }) => (
  <Tool $w={16} aria-label={label}><Caret color={dim ? DIM : c.icon} /></Tool>
);

const PercentSign = styled.span`
  font-size: 24px;
  line-height: 24px;
  color: #999;
`;

function Ribbon() {
  return (
    <RibbonBar>
      <RibbonGroup name="剪贴板" width={180} left={12} launcher="on">
        <Big icon={<PasteIcon />} label="粘贴" width={58} />
        <ToolColumn>
          <WideTool $h={35}><IconSlot $w={27} $end><CutIcon /></IconSlot>剪切</WideTool>
          <WideTool $h={35} $far><IconSlot $w={27} $end><CopyIcon /></IconSlot>复制<Caret /></WideTool>
          <WideTool $h={35}><IconSlot $w={27} $end><BrushIcon /></IconSlot>格式刷</WideTool>
        </ToolColumn>
      </RibbonGroup>

      <RibbonGroup name="字体" width={376} left={12} launcher="on">
        <Stack>
          <ToolRow>
            <SelectBox $w={224}><select aria-label="字体"><option>等线 (正文)</option></select><Caret /></SelectBox>
            <SelectBox $w={58}><select aria-label="字号"><option>11</option></select><Caret /></SelectBox>
            <Tool aria-label="增大字号"><GrowFont /></Tool>
            <Tool aria-label="减小字号"><GrowFont small /></Tool>
          </ToolRow>
          <ToolRow>
            <Tool><Letter>B</Letter></Tool>
            <Tool><SerifLetter $italic>I</SerifLetter></Tool>
            <Tool><Letter $line>U</Letter></Tool>
            <DropCaret label="下划线类型" />
            <Split />
            <Tool $w={30} aria-label="边框"><BorderIcon /></Tool>
            <DropCaret label="边框类型" />
            <Split />
            <Tool aria-label="填充颜色"><FillIcon /></Tool>
            <DropCaret label="更多填充颜色" />
            <Tool aria-label="字体颜色"><FontColorIcon /></Tool>
            <DropCaret label="更多字体颜色" />
            <Split />
            <Tool $w={30} $dim><Phonetic>wén<b>文</b></Phonetic></Tool>
            <DropCaret label="拼音选项" dim />
          </ToolRow>
        </Stack>
      </RibbonGroup>

      <RibbonGroup name="对齐方式" width={363} left={12} launcher="dim">
        <Stack>
          <ToolRow>
            <Tool $on aria-label="顶端对齐"><Lines rows={[[0, 20, 0], [3, 17, 4], [0, 20, 8]]} /></Tool>
            <Tool aria-label="垂直居中"><Lines rows={[[0, 20, 6], [3, 17, 10], [0, 20, 14]]} /></Tool>
            <Tool aria-label="底端对齐"><Lines rows={[[0, 20, 12], [3, 17, 16], [0, 20, 20]]} /></Tool>
            <Split />
            <Tool $w={43} aria-label="方向"><OrientIcon /><Caret /></Tool>
          </ToolRow>
          <ToolRow>
            <Tool $on aria-label="左对齐"><Lines rows={[[0, 20, 1], [0, 16, 5], [0, 20, 9], [0, 16, 13], [0, 20, 17], [0, 16, 21]]} /></Tool>
            <Tool aria-label="居中"><Lines rows={[[0, 20, 1], [3, 17, 5], [0, 20, 9], [3, 17, 13], [0, 20, 17], [3, 17, 21]]} /></Tool>
            <Tool aria-label="右对齐"><Lines rows={[[0, 20, 1], [4, 20, 5], [0, 20, 9], [4, 20, 13], [0, 20, 17], [4, 20, 21]]} /></Tool>
            <Split />
            <Tool $w={30} aria-label="减少缩进量"><IndentIcon out /></Tool>
            <Tool aria-label="增加缩进量"><IndentIcon /></Tool>
          </ToolRow>
        </Stack>
        <TallSplit />
        <Stack>
          <WideTool $h={35} $dim><IconSlot $w={23}><WrapIcon /></IconSlot>自动换行</WideTool>
          <WideTool $h={35} $dim $far><IconSlot $w={23}><MergeIcon /></IconSlot>合并后居中<Caret color={DIM} /></WideTool>
        </Stack>
      </RibbonGroup>

      <RibbonGroup name="数字" width={218} left={12} launcher="dim">
        <Stack>
          <SelectBox $w={194} $dim><select aria-label="数字格式"><option>常规</option></select><Caret color={DIM} /></SelectBox>
          <ToolRow>
            <Tool aria-label="会计数字格式"><MoneyIcon /></Tool>
            <DropCaret label="货币" dim />
            <Tool $dim><PercentSign>%</PercentSign></Tool>
            <Tool aria-label="千位分隔样式">
              <svg width="10" height="17"><path d="M1 5A4 4 0 0 1 9 5Q9 13 2 16L1 14Q5 12 5 9Q1 8 1 5Z" fill="#999" /></svg>
            </Tool>
            <Split />
            <Tool $w={30} aria-label="增加小数位数"><DecimalIcon more /></Tool>
            <Tool aria-label="减少小数位数"><DecimalIcon /></Tool>
          </ToolRow>
        </Stack>
      </RibbonGroup>

      <RibbonGroup name="样式" width={292} left={10}>
        <Big icon={<CondIcon />} label="条件格式" width={82} dim />
        <Big icon={<TableStyleIcon />} label="套用" second="表格格式" width={90} dim />
        <Big icon={<CellStyleIcon />} label="单元格样式" width={98} dim />
      </RibbonGroup>

      <RibbonGroup name="单元格" width={210} left={12}>
        <Big icon={<InsertIcon />} label="插入" width={62} />
        <Big icon={<DeleteIcon />} label="删除" width={62} />
        <Big icon={<FormatIcon />} label="格式" width={62} />
      </RibbonGroup>

      <RibbonGroup name="编辑" width={351} left={17}>
        <ToolColumn $w={126}>
          <WideTool $h={34} $dim $far><IconSlot $w={21}><SigmaIcon /></IconSlot>自动求和<Caret color={DIM} /></WideTool>
          <WideTool $h={34} $dim><IconSlot $w={21}><FillDownIcon /></IconSlot>填充<Caret color={DIM} /></WideTool>
          <WideTool $h={34}><IconSlot $w={21}><EraserIcon /></IconSlot>清除<Caret /></WideTool>
        </ToolColumn>
        <Big icon={<SortIcon />} label="排序和筛选" width={98} dim />
        <Big icon={<FindIcon />} label="查找和选择" width={98} />
      </RibbonGroup>

      <Collapse aria-label="折叠功能区">
        <svg width="12" height="8" fill="none" stroke="#555" strokeWidth="2"><path d="M1 7L6 1L11 7" /></svg>
      </Collapse>
    </RibbonBar>
  );
}

const columns = 'ABCDEFGHIJKLMNO'.split('');
const widths = columns.map((_, i) => (i === 0 ? 225 : i === 1 ? 130 : 104));
const titles: Record<number, string> = { 1: '一、整体销售概况', 2: '1、业绩达成情况：' };
const records: Record<number, [string, string]> = {
  3: ['本月业绩指标', '1000000'],
  4: ['本月实际业绩', '406673'],
  5: ['本月指标达成', '50%'],
};

function SheetGrid() {
  const rows = Array.from({ length: 30 }, (_, i) => i + 1);
  return (
    <Sheet>
      <Cells>
        <colgroup>
          <col width={40} />
          {widths.map((w, i) => <col key={i} width={w} />)}
        </colgroup>
        <thead>
          <tr>
            <HeadCell aria-label="全选"><svg width="19" height="19"><polygon points="19,0 19,19 0,19" fill="#b3b3b3" /></svg></HeadCell>
            {columns.map(l => <HeadCell key={l} scope="col">{l}</HeadCell>)}
          </tr>
        </thead>
        <tbody>
          {rows.map(r => (
            <tr key={r}>
              <RowHead scope="row" $tall={r <= 5}>{r < 30 ? r : null}</RowHead>
              {titles[r] && <Cell colSpan={2} $kind="title">{titles[r]}</Cell>}
              {records[r] && <><Cell $kind="label">{records[r][0]}</Cell><Cell $kind="number">{records[r][1]}</Cell></>}
              {columns.slice(r <= 5 ? 2 : 0).map(l => <Cell key={l} />)}
            </tr>
          ))}
        </tbody>
      </Cells>
      <Rectangle $x={104} $y={387} $w={676} $h={388} />
      <Ring $x={842} $y={96} $w={404} $h={408} />
      <Disc $x={1262} $y={245} $w={404} $h={408} />
    </Sheet>
  );
}

function Radio({ group, text, k, checked }: { group: string; text: string; k: string; checked?: boolean }) {
  return (
    <RadioRow>
      <input type="radio" name={group} defaultChecked={checked} />
      <span>{text}(<Key>{k}</Key>)</span>
    </RadioRow>
  );
}

const big = { w: 11, h: 6 };

function FormatPane() {
  return (
    <Pane>
      <PaneTitle>
        <PaneName>设置形状格式</PaneName>
        <PaneIconButton $after={48} aria-label="任务窗格选项"><Caret w={13} h={7} color="#777" /></PaneIconButton>
        <PaneIconButton aria-label="关闭">
          <svg width="15" height="15" stroke="#666" strokeWidth="4"><path d="M1 1L14 14M14 1L1 14" /></svg>
        </PaneIconButton>
      </PaneTitle>
      <PaneTabs>
        <PaneTab $active>形状选项</PaneTab>
        <PaneTab>文本选项</PaneTab>
      </PaneTabs>
      <PaneIcons>
        <Category $on aria-label="填充与线条"><BucketIcon /></Category>
        <Category aria-label="效果"><PentagonIcon /></Category>
        <Category aria-label="大小与属性"><SizeIcon /></Category>
        <svg width="22" height="14" fill={c.chrome} stroke={c.line} strokeWidth="1.500"><path d="M1 13L11 1L21 13" /><path d="M2 13.500H20" stroke={c.chrome} /></svg>
      </PaneIcons>
      <PaneBody>
        <Options>
          <SectionHead><svg width="11" height="11"><polygon points="11,0 11,11 0,11" fill="#444" /></svg>填充</SectionHead>
          <RadioList $after={23}>
            <Radio group="fill" text="无填充" k="N" checked />
            <Radio group="fill" text="纯色填充" k="S" />
            <Radio group="fill" text="渐变填充" k="G" />
            <Radio group="fill" text="图片或纹理填充" k="P" />
            <Radio group="fill" text="图案填充" k="A" />
          </RadioList>
          <SectionHead><svg width="11" height="11"><polygon points="11,0 11,11 0,11" fill="#444" /></svg>线条</SectionHead>
          <RadioList $after={7}>
            <Radio group="line" text="无线条" k="N" />
            <Radio group="line" text="实线" k="S" checked />
            <Radio group="line" text="渐变线" k="G" />
          </RadioList>
          <Fields>
            <Field $h={39}>
              <span>颜色(<Key>C</Key>)</span>
              <DropButton aria-label="颜色"><PenIcon /><Caret {...big} /></DropButton>
            </Field>
            <Field $h={34}>
              <label htmlFor="alpha">透明度(<Key>T</Key>)</label>
              <Range type="range" defaultValue={0} aria-label="透明度" $w={67} $thumbW={4} $thumbH={14} $thumb="#777" />
              <Spinner>
                <input id="alpha" defaultValue="0%" />
                <SpinArrows><Caret dir="up" /><Caret /></SpinArrows>
              </Spinner>
            </Field>
            <Field $h={34}>
              <label htmlFor="weight">宽度(<Key>W</Key>)</label>
              <Spinner>
                <input id="weight" defaultValue="5 磅" />
                <SpinArrows><Caret dir="up" /><Caret /></SpinArrows>
              </Spinner>
            </Field>
            <Field $h={39}>
              <span>复合类型(<Key>C</Key>)</span>
              <DropButton aria-label="复合类型"><CompoundIcon /><Caret {...big} /></DropButton>
            </Field>
            <Field $h={39}>
              <span>短划线类型(<Key>D</Key>)</span>
              <DropButton aria-label="短划线类型"><DashIcon /><Caret {...big} /></DropButton>
            </Field>
            <Field $h={32}>
              <label htmlFor="cap">线端类型(<Key>A</Key>)</label>
              <PaneSelect $w={72} $h={32}><select id="cap"><option>平</option></select><Caret {...big} /></PaneSelect>
            </Field>
            <Field $h={32}>
              <label htmlFor="join">连接类型(<Key>J</Key>)</label>
              <PaneSelect $w={78} $h={32}><select id="join"><option>斜角</option></select><Caret {...big} /></PaneSelect>
            </Field>
            <Field $h={39} $dim>
              <span>开始箭头类型(<Key>B</Key>)</span>
              <DropButton $dim aria-label="开始箭头类型"><ArrowsIcon /><Caret {...big} color={DIM} /></DropButton>
            </Field>
            <Field $h={39} $dim>
              <span>开始箭头粗细(<Key>S</Key>)</span>
              <DropButton $dim aria-label="开始箭头粗细"><WeightsIcon /><Caret {...big} color={DIM} /></DropButton>
            </Field>
            <Field $h={39} $dim>
              <span>结束箭头类型(<Key>E</Key>)</span>
              <DropButton $dim aria-label="结束箭头类型"><ArrowsIcon /><Caret {...big} color={DIM} /></DropButton>
            </Field>
          </Fields>
        </Options>
        <PaneScroll>
          <ScrollButton aria-label="向上"><Caret w={11} h={6} dir="up" /></ScrollButton>
          <Thumb $grow={10} />
          <Track $grow={1} />
          <ScrollButton aria-label="向下"><Caret w={11} h={6} /></ScrollButton>
        </PaneScroll>
      </PaneBody>
    </Pane>
  );
}

export default function App() {
  return (
    <Window>
      <Global />
      <Header>
        <QuickAccess>
          <QuickButton $after={8} aria-label="保存"><SaveIcon /></QuickButton>
          <QuickButton aria-label="撤消"><UndoIcon /><Caret color="#fff" /></QuickButton>
          <QuickButton aria-label="恢复"><RedoIcon /><Caret color="#4f9370" /></QuickButton>
          <QuickButton aria-label="图表"><ChartIcon /></QuickButton>
          <QuickButton $before={14} aria-label="自定义快速访问工具栏">
            <svg width="7" height="8" fill="#fff"><path d="M0 0H7V1H0ZM0 4H7L3.500 8Z" /></svg>
          </QuickButton>
        </QuickAccess>
        <Tabs>
          <Tab $file>文件</Tab>
          <Tab $active>开始</Tab>
          {['插入', '页面布局', '公式', '数据', '审阅', '视图', '开发工具', '帮助'].map(t => <Tab key={t}>{t}</Tab>)}
        </Tabs>
        <ContextGroup>
          <ContextTitle>绘图工具</ContextTitle>
          <Tab>格式</Tab>
        </ContextGroup>
        <TitleArea>
          <DocTitle>动态销售月报看板  -  Excel</DocTitle>
          <SignIn>登录</SignIn>
          <WindowControls>
            <ControlButton aria-label="功能区显示选项">
              <svg width="20" height="16" fill="none" stroke={c.mint}><path d="M.5 .5H19.500V15.500H.5ZM0 3.500H20M10 14V6M7 9L10 6L13 9" /></svg>
            </ControlButton>
            <ControlButton aria-label="最小化">
              <svg width="16" height="16" stroke={c.mint}><path d="M0 8.500H16" /></svg>
            </ControlButton>
            <ControlButton aria-label="还原">
              <svg width="16" height="16" fill="none" stroke={c.mint}><path d="M.5 3.500H12.500V15.500H.5ZM3.500 3V.5H15.500V12.500H13" /></svg>
            </ControlButton>
            <ControlButton aria-label="关闭窗口">
              <svg width="16" height="16" stroke={c.mint} strokeWidth="1.500"><path d="M1 1L15 15M15 1L1 15" /></svg>
            </ControlButton>
          </WindowControls>
        </TitleArea>
        <TellMeRow>
          <TellMe><BulbIcon />操作说明搜索</TellMe>
          <Share><PersonIcon />共享</Share>
        </TellMeRow>
      </Header>

      <Ribbon />

      <FormulaBar>
        <NameBox><input aria-label="名称框" defaultValue="椭圆 2" /><Caret /></NameBox>
        <Grip><i /></Grip>
        <FormulaButtons>
          <ControlButton aria-label="取消"><svg width="18" height="16" stroke="#bdbdbd" strokeWidth="2.500"><path d="M1 1L17 15M17 1L1 15" /></svg></ControlButton>
          <ControlButton aria-label="输入"><svg width="20" height="16" fill="none" stroke="#bdbdbd" strokeWidth="4"><path d="M1 9L7 14L19 1" /></svg></ControlButton>
          <ControlButton aria-label="插入函数"><FxText>f<small>x</small></FxText></ControlButton>
        </FormulaButtons>
        <FormulaInput aria-label="编辑栏" />
      </FormulaBar>

      <Workspace>
        <Book>
          <SheetGrid />
          <VScroll>
            <ScrollButton aria-label="向上滚动"><Caret w={11} h={6} dir="up" /></ScrollButton>
            <Thumb $grow={27} />
            <Track $grow={1} />
            <ScrollButton aria-label="向下滚动"><Caret w={11} h={6} /></ScrollButton>
          </VScroll>
          <SheetBar>
            <SheetNav><Caret w={6} h={11} dir="left" color="#bdbdbd" /><Caret w={6} h={11} dir="right" color="#bdbdbd" /></SheetNav>
            <SheetTab $edge="left">数据源</SheetTab>
            <SheetTab $edge="left">图表数据</SheetTab>
            <SheetTab $active $edge="both">Sheet2</SheetTab>
            <SheetTab $edge="right">Sheet1</SheetTab>
            <AddSheet aria-label="新工作表">
              <svg width="23" height="23" fill="none" stroke="currentColor" strokeWidth="1.500"><circle cx="11.500" cy="11.500" r="10.500" /><path d="M11.500 6V17M6 11.500H17" strokeWidth="2" /></svg>
            </AddSheet>
            <GripHolder><Grip><i /></Grip></GripHolder>
            <HScroll>
              <ScrollButton aria-label="向左滚动"><Caret w={6} h={11} dir="left" /></ScrollButton>
              <Thumb $grow={15} />
              <Track $grow={2} />
              <ScrollButton aria-label="向右滚动"><Caret w={6} h={11} dir="right" /></ScrollButton>
            </HScroll>
          </SheetBar>
        </Book>
        <FormatPane />
      </Workspace>

      <StatusBar>
        <StatusText><span>就绪</span><span>计算</span><MacroIcon /></StatusText>
        <ViewButton $on aria-label="普通">
          <svg width="19" height="19" fill="none" stroke="#666"><path d="M.5 .5H18.500V18.500H.5ZM0 6.500H19M0 12.500H19M6.500 0V19M12.500 0V19" /></svg>
        </ViewButton>
        <ViewButton aria-label="页面布局视图">
          <svg width="19" height="19" fill="none" stroke="#666"><path d="M.5 .5H18.500V18.500H.5ZM4.500 3.500H14.500V15.500H4.500ZM7 6.500H12M7 9.500H12M7 12.500H12" /></svg>
        </ViewButton>
        <ViewButton aria-label="分页预览">
          <svg width="19" height="19" fill="none" stroke="#666"><path d="M.5 .5H18.500V18.500H.5ZM6.500 0V10M12.500 0V10M0 10.500H13" /></svg>
        </ViewButton>
        <Zoom>
          <ControlButton aria-label="缩小"><svg width="12" height="12" stroke="#444"><path d="M0 6.500H12" /></svg></ControlButton>
          <Range type="range" defaultValue={50} aria-label="显示比例" $w={148} $thumbW={8} $thumbH={18} $thumb="#666" />
          <ControlButton aria-label="放大"><svg width="12" height="12" stroke="#444"><path d="M0 6.500H12M6.500 0V12" /></svg></ControlButton>
          <ZoomValue>100%</ZoomValue>
        </Zoom>
      </StatusBar>
      <Desktop><DesktopWindow /><DesktopTile /></Desktop>

      <Watermark>
        <MarkRow>
          <MarkLatin>Bai</MarkLatin>
          <Paw />
          <MarkHan>经验</MarkHan>
        </MarkRow>
        <MarkUrl>jingyan.baidu.com</MarkUrl>
      </Watermark>
    </Window>
  );
}
